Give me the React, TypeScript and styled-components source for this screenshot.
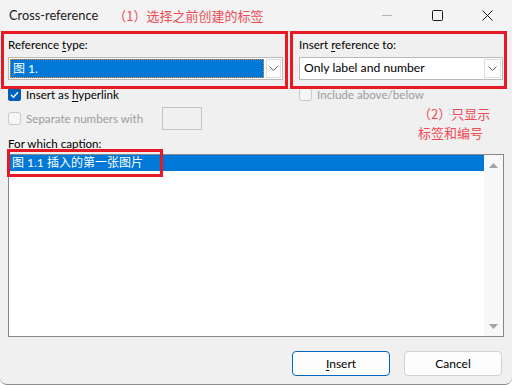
import styled, { createGlobalStyle } from "styled-components";

const GlobalStyle = createGlobalStyle`
  html, body {
    margin: 0;
    padding: 0;
    background: #ffffff;
  }
  body {
    font-family: Lato, "Noto Sans CJK SC", sans-serif;
    font-size: 11.6px;
    color: #000;
  }
  * {
    box-sizing: border-box;
  }
`;

const Window = styled.div`
  width: 512px;
  height: 385px;
  background: #f0f0f0;
  display: flex;
  flex-direction: column;
  border-radius: 0 0 7px 7px;
  border-bottom: 1px solid #8c8c8c;
  overflow: hidden;
`;

const TitleBar = styled.div`
  height: 30px;
  display: flex;
  align-items: center;
  padding-left: 9px;
  background: #f3f3f3;
`;

const Title = styled.span`
  font-size: 12.8px;
  color: #1a1a1a;
`;

const Note = styled.span`
  font-family: "Noto Sans CJK SC", sans-serif;
  font-size: 13px;
  color: #ef4b55;
  margin-left: 15px;
`;

const Controls = styled.div`
  margin-left: auto;
  display: flex;
  align-self: stretch;
`;

const CtrlButton = styled.div`
  width: 50px;
  display: flex;
  align-items: center;
  justify-content: center;
`;

const TopRow = styled.div`
  display: flex;
  gap: 2px;
  padding-left: 1px;
  margin-top: 1px;
  margin-bottom: -3px;
  position: relative;
  z-index: 1;
`;

const Frame = styled.div<{ $w: number; $pl: number; $pr: number }>`
  width: ${(p) => p.$w}px;
  height: 58px;
  border: 3px solid #e51a24;
  padding: 3px ${(p) => p.$pr}px 0 ${(p) => p.$pl}px;
  display: flex;
  flex-direction: column;
  gap: 4px;
`;

const Label = styled.div`
  height: 16px;
  line-height: 16px;
  white-space: nowrap;
`;

const U = styled.span`
  text-decoration: underline;
  text-underline-offset: 2px;
`;

const Select = styled.div`
  height: 23px;
  background: #fff;
  border: 1px solid #b9b9b9;
  display: flex;
`;

const SelectValue = styled.div`
  flex: 1;
  padding: 1px;
  display: flex;
`;

const FocusedValue = styled.div`
  flex: 1;
  background: #0078d7;
  border: 1px dotted #ff8728;
  color: #fff;
  padding-left: 2px;
  line-height: 17px;
  font-size: 12px;
`;

const PlainValue = styled.div`
  flex: 1;
  padding-left: 4px;
  line-height: 20px;
  font-size: 12.2px;
`;

const DropButton = styled.div<{ $w: number }>`
  width: ${(p) => p.$w}px;
  margin: 1px;
  border: 1px solid #dedede;
  background: #fdfdfd;
  display: flex;
  align-items: center;
  justify-content: center;
`;

const Options = styled.div`
  display: grid;
  grid-template-columns: 291px 1fr;
  padding-left: 8px;
`;

const Column = styled.div`
  display: flex;
  flex-direction: column;
`;

const CheckRow = styled.div<{ $disabled?: boolean }>`
  display: flex;
  align-items: center;
  gap: 5px;
  height: 16px;
  white-space: nowrap;
  color: ${(p) => (p.$disabled ? "#9c9c9c" : "#000")};
`;

const Box = styled.span<{ $checked?: boolean }>`
  width: 13px;
  height: 13px;
  flex: none;
  border-radius: ${(p) => (p.$checked ? 2 : 3)}px;
  border: 1px solid ${(p) => (p.$checked ? "#005fb8" : "#c9c9c9")};
  background: ${(p) => (p.$checked ? "#005fb8" : "#f6f6f6")};
  display: flex;
  align-items: center;
  justify-content: center;
`;

const SepRow = styled.div`
  width: 194px;
  height: 23px;
  margin-top: 5px;
  display: flex;
  align-items: center;
  justify-content: space-between;
`;

const TextBox = styled.div`
  width: 40px;
  height: 23px;
  border: 1px solid #c4c4c4;
  background: #f0f0f0;
`;

const SideNote = styled.div`
  font-family: "Noto Sans CJK SC", sans-serif;
  font-size: 13px;
  line-height: 19px;
  color: #ef4b55;
  margin: 2px 0 -13px 119px;
`;

const CaptionArea = styled.div`
  position: relative;
  padding: 6px 0 0 8px;
`;

const CaptionLabel = styled(Label)`
  margin-bottom: 2px;
`;

const ListBox = styled.div`
  width: 496px;
  height: 183px;
  border: 1px solid #828790;
  background: #fff;
  display: flex;
`;

const ListItems = styled.div`
  flex: 1;
`;

const ListItem = styled.div<{ $selected?: boolean }>`
  height: 16px;
  line-height: 16px;
  padding-left: 3px;
  font-size: 12px;
  background: ${(p) => (p.$selected ? "#0078d7" : "transparent")};
  color: ${(p) => (p.$selected ? "#fff" : "#000")};
`;

const ScrollBar = styled.div`
  width: 19px;
  background: #f7f7f7;
  display: flex;
  flex-direction: column;
  align-items: center;
  justify-content: space-between;
  padding: 8px 0 7px;
`;

const RedMark = styled.div`
  position: absolute;
  left: 7px;
  top: 19px;
  width: 156px;
  height: 28px;
  border: 3px solid #e51a24;
  pointer-events: none;
`;

const ButtonRow = styled.div`
  display: flex;
  justify-content: flex-end;
  gap: 14px;
  padding-right: 10px;
  margin-top: 14px;
`;

const Button = styled.div<{ $primary?: boolean }>`
  width: 98px;
  height: 25px;
  border: 1px solid ${(p) => (p.$primary ? "#0067c0" : "#d0d0d0")};
  border-radius: 4px;
  background: #fdfdfd;
  display: flex;
  align-items: center;
  justify-content: center;
  font-size: 12px;
`;

const Chevron = () => (
  <svg width="9" height="5" viewBox="0 0 9 5">
    <polyline points="0.5,0.5 4.5,4.5 8.5,0.5" fill="none" stroke="#606060" strokeWidth="1" />
  </svg>
);

const Tick = () => (
  <svg width="11" height="11" viewBox="0 0 11 11">
    <polyline points="2,5.8 4.4,8.2 9,3.2" fill="none" stroke="#fff" strokeWidth="1.3" />
  </svg>
);

const Arrow = ({ up }: { up?: boolean }) => (
  <svg width="9" height="5" viewBox="0 0 9 5">
    <polygon points={up ? "0,5 4.5,0 9,5" : "0,0 4.5,5 9,0"} fill="#a3a3a3" />
  </svg>
);

export default function App() {
  return (
    <>
      <GlobalStyle />
      <Window>
        <TitleBar>
          <Title>Cross-reference</Title>
          <Note>（1）选择之前创建的标签</Note>
          <Controls>
            <CtrlButton>
              <svg width="10" height="10" viewBox="0 0 10 10">
                <line x1="0" y1="5.5" x2="10" y2="5.5" stroke="#b5b5b5" strokeWidth="1" />
              </svg>
            </CtrlButton>
            <CtrlButton>
              <svg width="11" height="11" viewBox="0 0 11 11">
                <rect x="0.5" y="0.5" width="10" height="10" rx="1" fill="none" stroke="#1a1a1a" strokeWidth="1" />
              </svg>
            </CtrlButton>
            <CtrlButton>
              <svg width="11" height="11" viewBox="0 0 11 11">
                <path d="M0.5 0.5 L10.5 10.5 M10.5 0.5 L0.5 10.5" stroke="#1a1a1a" strokeWidth="1" />
              </svg>
            </CtrlButton>
          </Controls>
        </TitleBar>

        <TopRow>
          <Frame $w={287} $pl={4} $pr={2}>
            <Label>
              Reference <U>t</U>ype:
            </Label>
            <Select>
              <SelectValue>
                <FocusedValue>图 1.</FocusedValue>
              </SelectValue>
              <DropButton $w={15}>
                <Chevron />
              </DropButton>
            </Select>
          </Frame>
          <Frame $w={217} $pl={6} $pr={1}>
            <Label>
              Insert <U>r</U>eference to:
            </Label>
            <Select>
              <PlainValue>Only label and number</PlainValue>
              <DropButton $w={17}>
                <Chevron />
              </DropButton>
            </Select>
          </Frame>
        </TopRow>

        <Options>
          <Column>
            <CheckRow>
              <Box $checked>
                <Tick />
              </Box>
              <span>
                Insert as <U>h</U>yperlink
              </span>
            </CheckRow>
            <SepRow>
              <CheckRow $disabled>
                <Box />
                <span>Separate numbers with</span>
              </CheckRow>
              <TextBox />
            </SepRow>
          </Column>
          <Column>
            <CheckRow $disabled>
              <Box />
              <span>Include above/below</span>
            </CheckRow>
            <SideNote>
              （2）只显示
              <br />
              标签和编号
            </SideNote>
          </Column>
        </Options>

        <CaptionArea>
          <CaptionLabel>
            For <U>w</U>hich caption:
          </CaptionLabel>
          <ListBox>
            <ListItems>
              <ListItem $selected>图 1.1 插入的第一张图片</ListItem>
            </ListItems>
            <ScrollBar>
              <Arrow up />
              <Arrow />
            </ScrollBar>
          </ListBox>
          <RedMark />
        </CaptionArea>

        <ButtonRow>
          <Button $primary>
            <span>
              <U>I</U>nsert
            </span>
          </Button>
          <Button>Cancel</Button>
        </ButtonRow>
      </Window>
    </>
  );
}
